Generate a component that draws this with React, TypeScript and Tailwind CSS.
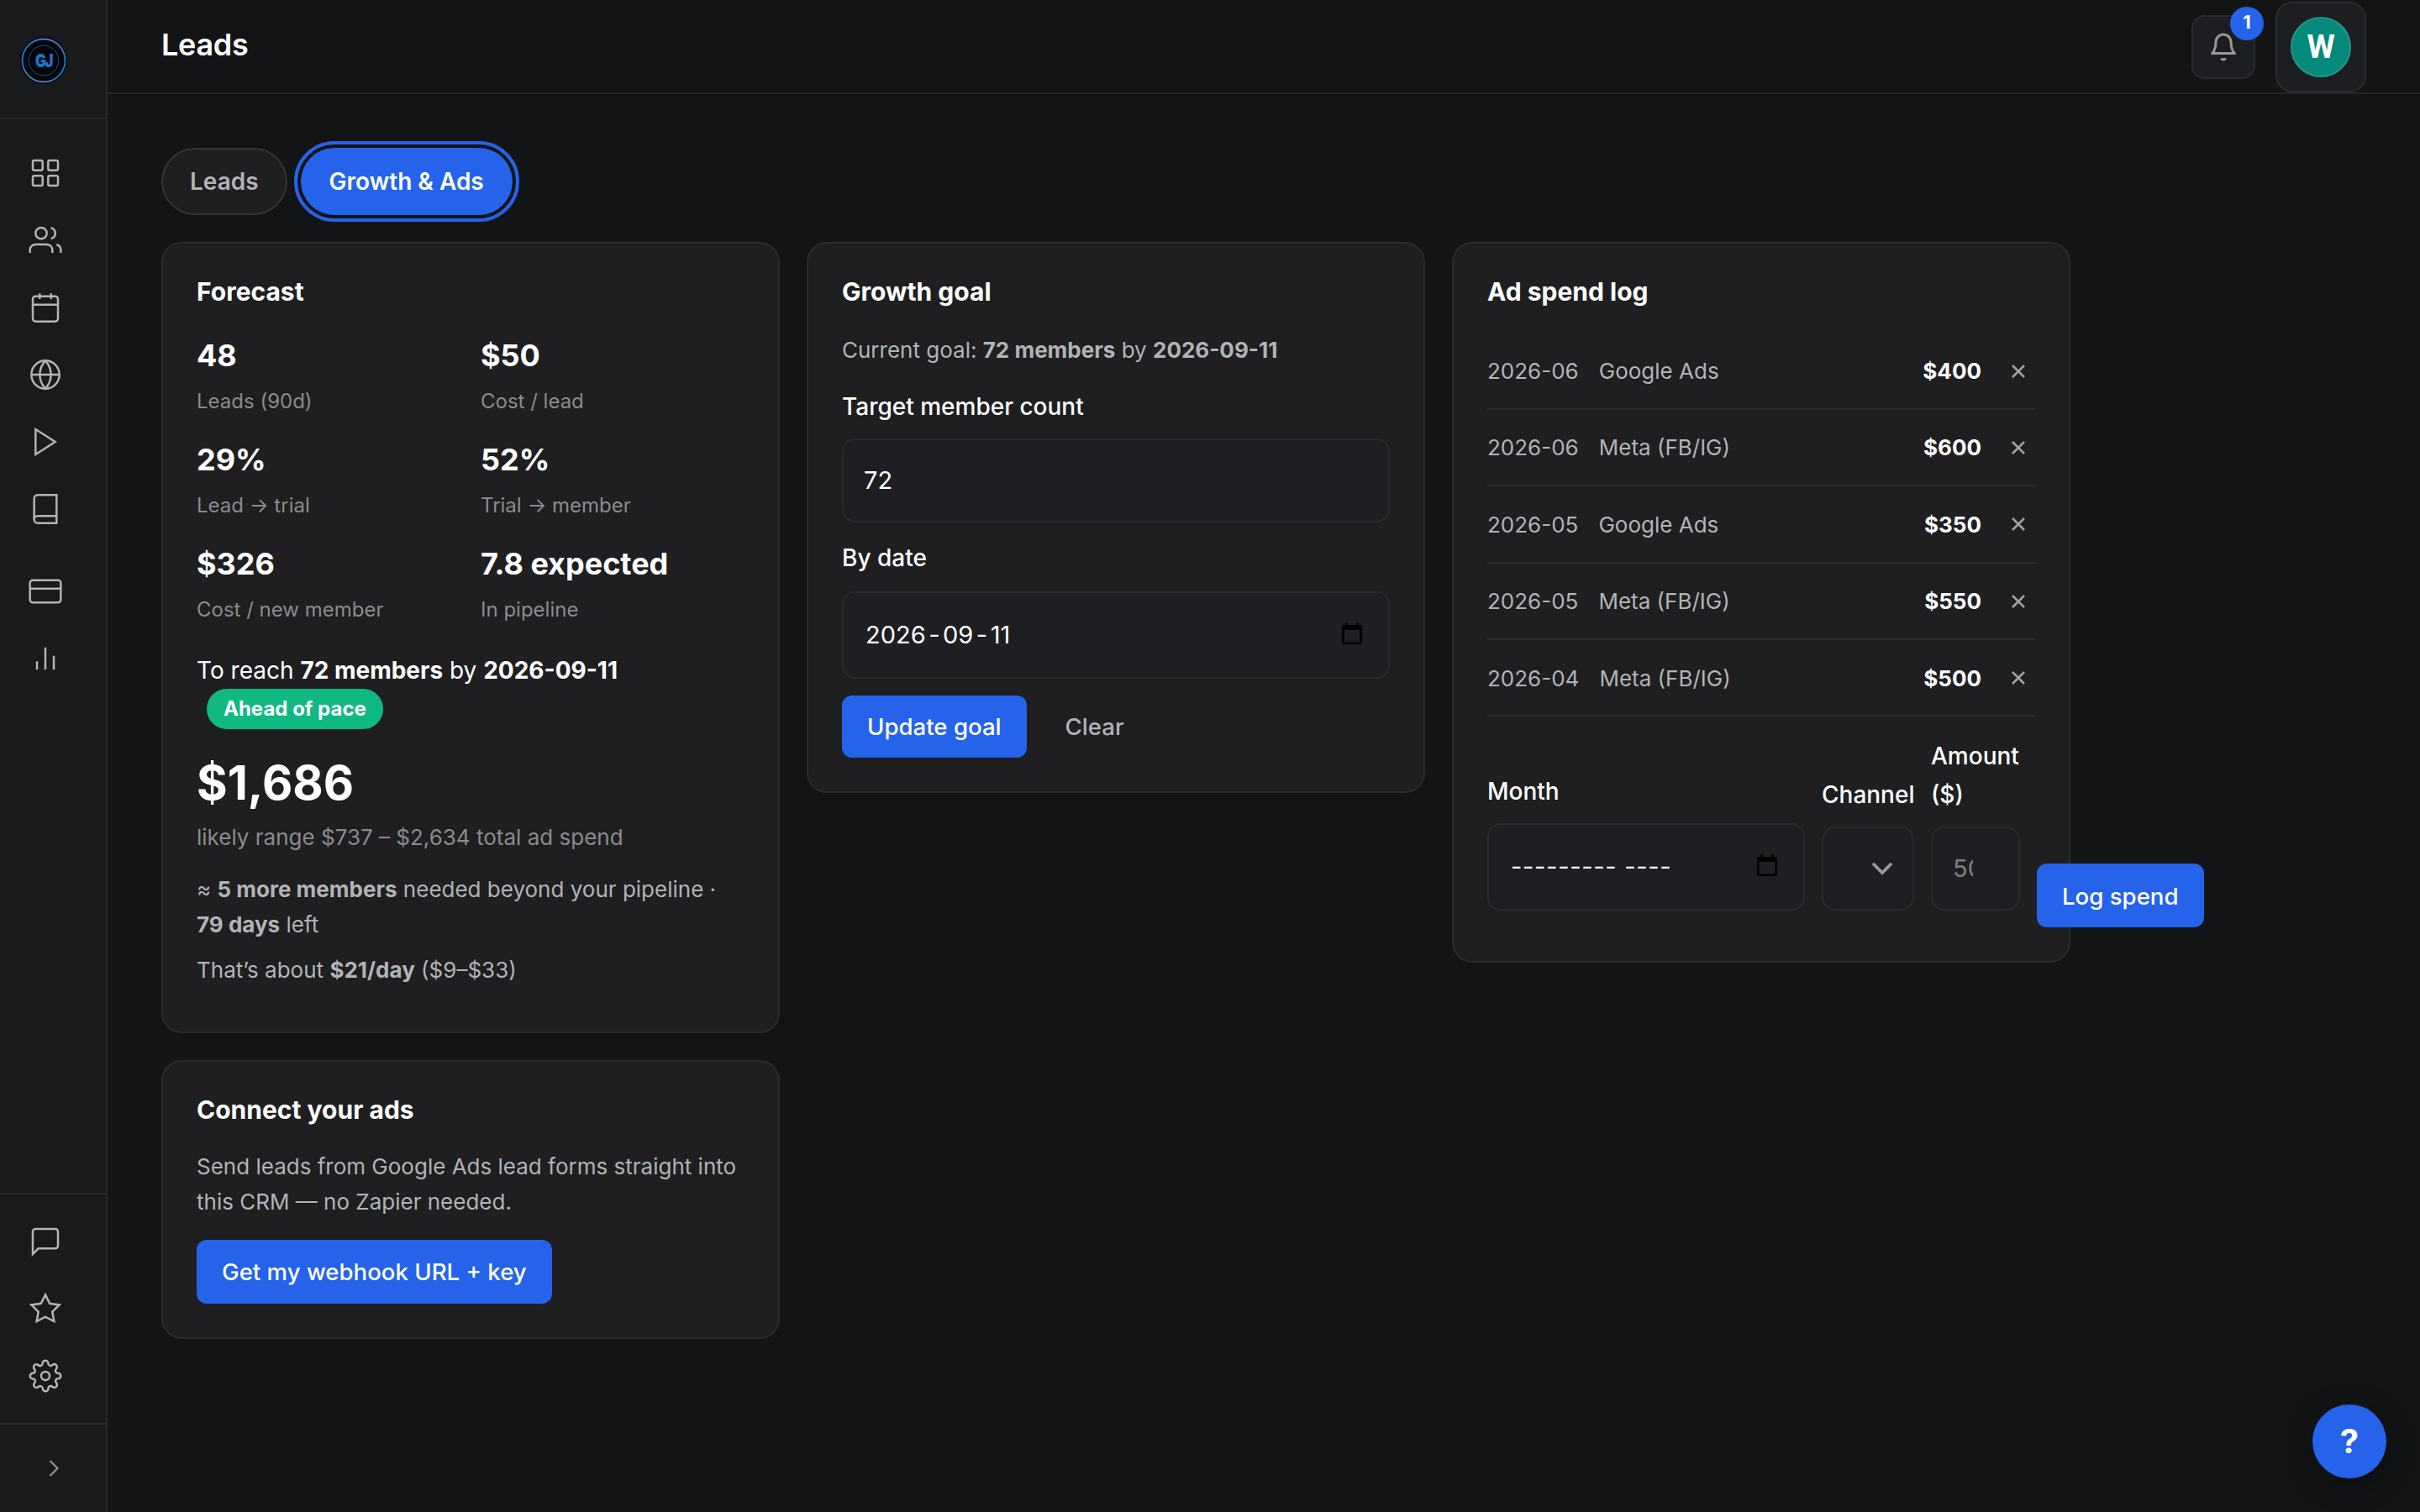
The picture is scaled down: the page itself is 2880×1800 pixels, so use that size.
import type { ReactNode } from "react";

interface IconProps {
  size?: number;
  strokeWidth?: number;
  children: ReactNode;
}

function Icon({ size = 40, strokeWidth = 1.5, children }: IconProps) {
  return (
    <svg
      width={size}
      height={size}
      viewBox="0 0 24 24"
      fill="none"
      stroke="currentColor"
      strokeWidth={strokeWidth}
      className="flex-shrink-0"
    >
      {children}
    </svg>
  );
}

const mainNav = [
  {
    id: "dashboard",
    icon: (
      <>
        <rect x="3" y="3" width="7" height="7" rx="1" />
        <rect x="14" y="3" width="7" height="7" rx="1" />
        <rect x="3" y="14" width="7" height="7" rx="1" />
        <rect x="14" y="14" width="7" height="7" rx="1" />
      </>
    ),
  },
  {
    id: "members",
    icon: (
      <>
        <path d="M17 21v-2a4 4 0 0 0-4-4H5a4 4 0 0 0-4 4v2" />
        <circle cx="9" cy="7" r="4" />
        <path d="M23 21v-2a4 4 0 0 0-3-3.87" />
        <path d="M16 3.13a4 4 0 0 1 0 7.75" />
      </>
    ),
  },
  {
    id: "calendar",
    icon: (
      <>
        <rect x="3" y="4" width="18" height="18" rx="2" />
        <path d="M16 2v4M8 2v4M3 10h18" />
      </>
    ),
  },
  {
    id: "website",
    icon: (
      <>
        <circle cx="12" cy="12" r="10" />
        <path d="M2 12h20" />
        <path d="M12 2a15.3 15.3 0 0 1 4 10 15.3 15.3 0 0 1-4 10 15.3 15.3 0 0 1-4-10 15.3 15.3 0 0 1 4-10z" />
      </>
    ),
  },
  { id: "videos", icon: <path d="M5 3l14 9-14 9V3z" /> },
  {
    id: "library",
    icon: (
      <>
        <path d="M4 19.5A2.5 2.5 0 0 1 6.5 17H20" />
        <path d="M6.5 2H20v20H6.5A2.5 2.5 0 0 1 4 19.5v-15A2.5 2.5 0 0 1 6.5 2z" />
      </>
    ),
  },
];

const moneyNav = [
  {
    id: "billing",
    icon: (
      <>
        <rect x="1" y="4" width="22" height="16" rx="2" />
        <path d="M1 10h22" />
      </>
    ),
  },
  { id: "reports", icon: <path d="M18 20V10M12 20V4M6 20v-6" /> },
];

const footerNav = [
  {
    id: "messages",
    icon: (
      <path d="M21 15a2 2 0 0 1-2 2H7l-4 4V5a2 2 0 0 1 2-2h14a2 2 0 0 1 2 2z" />
    ),
  },
  {
    id: "reviews",
    icon: (
      <path d="M12 2l3.09 6.26L22 9.27l-5 4.87 1.18 6.88L12 17.77l-6.18 3.25L7 14.14 2 9.27l6.91-1.01L12 2z" />
    ),
  },
  {
    id: "settings",
    icon: (
      <>
        <circle cx="12" cy="12" r="3" />
        <path d="M19.4 15a1.65 1.65 0 0 0 .33 1.82l.06.06a2 2 0 0 1 0 2.83 2 2 0 0 1-2.83 0l-.06-.06a1.65 1.65 0 0 0-1.82-.33 1.65 1.65 0 0 0-1 1.51V21a2 2 0 0 1-2 2 2 2 0 0 1-2-2v-.09A1.65 1.65 0 0 0 9 19.4a1.65 1.65 0 0 0-1.82.33l-.06.06a2 2 0 0 1-2.83 0 2 2 0 0 1 0-2.83l.06-.06a1.65 1.65 0 0 0 .33-1.82 1.65 1.65 0 0 0-1.51-1H3a2 2 0 0 1-2-2 2 2 0 0 1 2-2h.09A1.65 1.65 0 0 0 4.6 9a1.65 1.65 0 0 0-.33-1.82l-.06-.06a2 2 0 0 1 0-2.83 2 2 0 0 1 2.83 0l.06.06a1.65 1.65 0 0 0 1.82.33H9a1.65 1.65 0 0 0 1-1.51V3a2 2 0 0 1 2-2 2 2 0 0 1 2 2v.09a1.65 1.65 0 0 0 1 1.51 1.65 1.65 0 0 0 1.82-.33l.06-.06a2 2 0 0 1 2.83 0 2 2 0 0 1 0 2.83l-.06.06a1.65 1.65 0 0 0-.33 1.82V9a1.65 1.65 0 0 0 1.51 1H21a2 2 0 0 1 2 2 2 2 0 0 1-2 2h-.09a1.65 1.65 0 0 0-1.51 1z" />
      </>
    ),
  },
];

const stats = [
  { value: "48", label: "Leads (90d)" },
  { value: "$50", label: "Cost / lead" },
  { value: "29%", label: "Lead → trial" },
  { value: "52%", label: "Trial → member" },
  { value: "$326", label: "Cost / new member" },
  { value: "7.8 expected", label: "In pipeline" },
];

const spendLog = [
  { month: "2026-06", channel: "Google Ads", amount: 400 },
  { month: "2026-06", channel: "Meta (FB/IG)", amount: 600 },
  { month: "2026-05", channel: "Google Ads", amount: 350 },
  { month: "2026-05", channel: "Meta (FB/IG)", amount: 550 },
  { month: "2026-04", channel: "Meta (FB/IG)", amount: 500 },
];

function Logo() {
  return (
    <svg width="56" height="56" viewBox="0 0 56 56">
      <defs>
        <linearGradient id="ring" x1="0.7" y1="0" x2="0.3" y2="1">
          <stop offset="0" stopColor="#6f74cc" />
          <stop offset="0.3" stopColor="#1f7cc4" />
          <stop offset="0.7" stopColor="#1279c4" />
          <stop offset="1" stopColor="#6d78cc" />
        </linearGradient>
        <linearGradient id="mark" x1="0" y1="1" x2="1" y2="0">
          <stop offset="0" stopColor="#0d7fd0" />
          <stop offset="0.6" stopColor="#1f6fcb" />
          <stop offset="1" stopColor="#5560c4" />
        </linearGradient>
      </defs>
      <circle cx="28" cy="28" r="28" fill="#04080c" />
      <circle cx="28" cy="28" r="25.5" fill="none" stroke="url(#ring)" strokeWidth="1.8" />
      <circle cx="28" cy="28" r="17.8" fill="none" stroke="#17557a" strokeWidth="0.9" />
      <text
        x="28"
        y="36"
        textAnchor="middle"
        fontFamily="Inter, sans-serif"
        fontSize="21.5"
        fontWeight="900"
        letterSpacing="-2"
        textLength="20"
        lengthAdjust="spacingAndGlyphs"
        fill="url(#mark)"
      >
        GJ
      </text>
    </svg>
  );
}

function Sidebar() {
  return (
    <aside className="flex w-32 flex-shrink-0 flex-col border-r-2 border-[#28292b] bg-[#191a1c] text-[#b2b3b5]">
      <div className="flex h-[142px] items-center border-b-2 border-[#28292b] pt-1 pl-6">
        <Logo />
      </div>
      <nav className="flex flex-1 flex-col pt-11 pl-[34px]">
        <div className="flex flex-col gap-10">
          {mainNav.map((item) => (
            <Icon key={item.id}>{item.icon}</Icon>
          ))}
        </div>
        <div className="mt-[58px] flex flex-col gap-10">
          {moneyNav.map((item) => (
            <Icon key={item.id}>{item.icon}</Icon>
          ))}
        </div>
      </nav>
      <div className="flex h-[274px] flex-col gap-10 border-t-2 border-[#28292b] pt-9 pl-[34px]">
        {footerNav.map((item) => (
          <Icon key={item.id}>{item.icon}</Icon>
        ))}
      </div>
      <div className="flex h-[106px] items-center justify-center border-t-2 border-[#28292b] pl-0.5 text-[#8f9092]">
        <Icon size={36}>
          <path d="M9 18l6-6-6-6" />
        </Icon>
      </div>
    </aside>
  );
}

function Header() {
  return (
    <header className="flex h-28 items-center justify-between border-b-2 border-[#242527] px-16 pt-0.5">
      <h1 className="pb-1.5 text-4xl font-semibold tracking-[-0.3px]">Leads</h1>
      <div className="flex items-center gap-6">
        <button className="relative flex size-[76px] items-center justify-center rounded-2xl border-2 border-[#2a2b2d] bg-[#1d1e21] text-[#98999b]">
          <Icon size={36} strokeWidth={2}>
            <path
              strokeLinejoin="round"
              d="M18 8A6 6 0 0 0 6 8c0 7-3 9-3 9h18s-3-2-3-9"
            />
            <path d="M13.73 21a2 2 0 0 1-3.46 0" />
          </Icon>
          <span className="absolute -top-3 -right-3 flex size-10 items-center justify-center rounded-full bg-[#2563eb] pb-1 text-[22px] font-bold text-white">
            1
          </span>
        </button>
        <button className="flex size-[108px] items-center justify-center rounded-[20px] border-2 border-[#2a2b2d] bg-[#1d1e21]">
          <span className="flex size-[72px] items-center justify-center rounded-full border-2 border-[#25978a] bg-[#04897a] font-['Roboto',sans-serif] text-[38px] font-bold">
            W
          </span>
        </button>
      </div>
    </header>
  );
}

function Card({ title, children }: { title: string; children: ReactNode }) {
  return (
    <section className="rounded-3xl border-2 border-[#2a2b2d] bg-[#1f1f21] p-10">
      <h2 className="text-[30px] leading-[34px] font-bold">{title}</h2>
      {children}
    </section>
  );
}

function PrimaryButton({ children }: { children: ReactNode }) {
  return (
    <button className="flex h-[76px] items-center rounded-xl bg-[#2563eb] px-[30px] pt-px text-[27.6px] font-medium whitespace-nowrap">
      {children}
    </button>
  );
}

function CalendarGlyph() {
  return (
    <svg width="26" height="26" viewBox="0 0 26 26" className="mb-1 text-black">
      <path
        d="M5 0h3v3h10V0h3v3h2a2 2 0 0 1 2 2v19a2 2 0 0 1-2 2H3a2 2 0 0 1-2-2V5a2 2 0 0 1 2-2h2zM3.5 9v14.5h19V9z"
        fill="currentColor"
        fillRule="evenodd"
      />
    </svg>
  );
}

function ForecastCard() {
  return (
    <Card title="Forecast">
      <div className="mt-[30px] grid grid-cols-2 gap-x-6 gap-y-[21px]">
        {stats.map((stat) => (
          <div key={stat.label}>
            <div className="text-4xl leading-[58px] font-bold">{stat.value}</div>
            <div className="mt-[7px] text-2xl leading-[38px] text-[#8a8b8d]">
              {stat.label}
            </div>
          </div>
        ))}
      </div>
      <p className="mt-[30px] text-[28px] leading-[46px]">
        To reach <strong className="font-bold">72 members</strong> by{" "}
        <strong className="font-bold">2026-09-11</strong>
      </p>
      <div className="-mt-px ml-3 flex h-12 w-fit items-center rounded-full bg-[#10b981] px-5 text-2xl font-bold">
        Ahead of pace
      </div>
      <div className="mt-8 text-[56px] leading-[64px] font-bold">$1,686</div>
      <p className="mt-3 text-[26px] leading-[42px] text-[#8a8b8d]">
        likely range $737 – $2,634 total ad spend
      </p>
      <div className="mt-5 mb-3 flex flex-col gap-3 text-[26px] leading-[42px] text-[#b2b3b5]">
        <p>
          ≈ <strong className="font-bold">5 more members</strong> needed beyond
          your pipeline · <strong className="font-bold">79 days</strong> left
        </p>
        <p>
          That’s about <strong className="font-bold">$21/day</strong> ($9–$33)
        </p>
      </div>
    </Card>
  );
}

function ConnectCard() {
  return (
    <Card title="Connect your ads">
      <p className="mt-[30px] mb-6 text-[26px] leading-[42px] text-[#b2b3b5]">
        Send leads from Google Ads lead forms straight into this CRM — no
        Zapier needed.
      </p>
      <PrimaryButton>Get my webhook URL + key</PrimaryButton>
    </Card>
  );
}

function GoalCard() {
  return (
    <Card title="Growth goal">
      <p className="mt-8 text-[26px] leading-[42px] text-[#b2b3b5]">
        Current goal: <strong className="font-bold">72 members</strong> by{" "}
        <strong className="font-bold">2026-09-11</strong>
      </p>
      <div className="mt-[23px] text-[28px] leading-[46px] font-medium">
        Target member count
      </div>
      <div className="mt-[15px] flex h-[100px] items-center rounded-2xl border-2 border-[#2a2b2e] bg-[#1d1f22] px-6 text-[29px]">
        72
      </div>
      <div className="mt-[19px] text-[28px] leading-[46px] font-medium">
        By date
      </div>
      <div className="mt-[17px] flex h-[104px] items-center justify-between rounded-2xl border-2 border-[#2a2b2e] bg-[#1d1f22] pr-[30px] pl-[26px] text-[29px]">
        <div className="flex gap-[3.5px]">
          <span>2026</span>
          <span>-</span>
          <span>09</span>
          <span>-</span>
          <span>11</span>
        </div>
        <CalendarGlyph />
      </div>
      <div className="mt-5 flex h-[74px] items-stretch gap-[46px] text-[27.6px] *:h-auto">
        <PrimaryButton>Update goal</PrimaryButton>
        <button className="pt-0.5 font-medium text-[#b2b3b5]">Clear</button>
      </div>
    </Card>
  );
}

function SpendCard() {
  return (
    <Card title="Ad spend log">
      <ul className="mt-[32.4px] text-[26px]">
        {spendLog.map((row, i) => (
          <li
            key={i}
            className="flex h-[91.4px] items-center border-b-2 border-[#2c2d2f] pt-px text-[#b2b3b5]"
          >
            <span>{row.month}</span>
            <span className="ml-6 flex-1">{row.channel}</span>
            <strong className="font-bold text-white">${row.amount}</strong>
            <svg
              width="16"
              height="16"
              viewBox="0 0 16 16"
              className="mr-3 ml-9 text-[#a0a1a3]"
              stroke="currentColor"
              strokeWidth="2.6"
            >
              <path d="M1 1l14 14M15 1L1 15" />
            </svg>
          </li>
        ))}
      </ul>
      <div className="mt-6 flex items-end gap-5 text-[28px] leading-[46px]">
        <div className="mb-5 w-[378px] flex-shrink-0">
          <div className="font-medium">Month</div>
          <div className="mt-[15px] flex h-[104px] items-center justify-between rounded-2xl border-2 border-[#2a2b2e] bg-[#1d1f22] pr-[30px] pl-[26px] text-[29px]">
            <span className="tracking-[0.7px]">--------- ----</span>
            <CalendarGlyph />
          </div>
        </div>
        <div className="mb-5 w-[110px] flex-shrink-0">
          <div className="font-medium">Channel</div>
          <div className="mt-[15px] flex h-[100px] items-center justify-end rounded-2xl border-2 border-[#2a2b2e] bg-[#1d1f22] pr-[22px] text-[#98999b]">
            <svg
              width="28"
              height="18"
              viewBox="0 0 28 18"
              fill="none"
              stroke="currentColor"
              strokeWidth="3.8"
              strokeLinecap="round"
            >
              <path d="M4 4l10 10L24 4" />
            </svg>
          </div>
        </div>
        <div className="mb-5 w-[106px] flex-shrink-0">
          <div className="font-medium">Amount ($)</div>
          <div className="mt-[15px] flex h-[100px] items-center rounded-2xl border-2 border-[#2a2b2e] bg-[#1d1f22] pl-6 text-[29px] text-[#7f8082]">
            <span className="w-6 overflow-hidden">500</span>
          </div>
        </div>
        <PrimaryButton>Log spend</PrimaryButton>
      </div>
    </Card>
  );
}

export default function App() {
  return (
    <div className="relative flex h-[1800px] w-[2880px] overflow-hidden bg-[#121416] font-['Inter',sans-serif] text-white">
      <Sidebar />
      <div className="flex flex-1 flex-col">
        <Header />
        <main className="px-16 pt-16">
          <div className="flex gap-4 text-[28px] font-semibold">
            <button className="flex h-20 items-center rounded-full border-2 border-[#343537] bg-[#1f1f21] px-8 text-[#b2b3b5]">
              Leads
            </button>
            <button className="flex h-20 items-center rounded-full bg-[#2563eb] px-[34px] outline-4 outline-offset-4 outline-[#2563eb]">
              Growth &amp; Ads
            </button>
          </div>
          <div className="mt-8 flex items-start gap-8">
            <div className="flex w-[736px] flex-col gap-8">
              <ForecastCard />
              <ConnectCard />
            </div>
            <div className="w-[736px]">
              <GoalCard />
            </div>
            <div className="w-[736px]">
              <SpendCard />
            </div>
          </div>
        </main>
      </div>
      <button className="absolute right-10 bottom-10 flex size-[88px] items-center justify-center rounded-full bg-[#2563eb] text-[40px] font-bold shadow-[0_8px_32px_rgba(0,0,0,0.35)]">
        ?
      </button>
    </div>
  );
}
